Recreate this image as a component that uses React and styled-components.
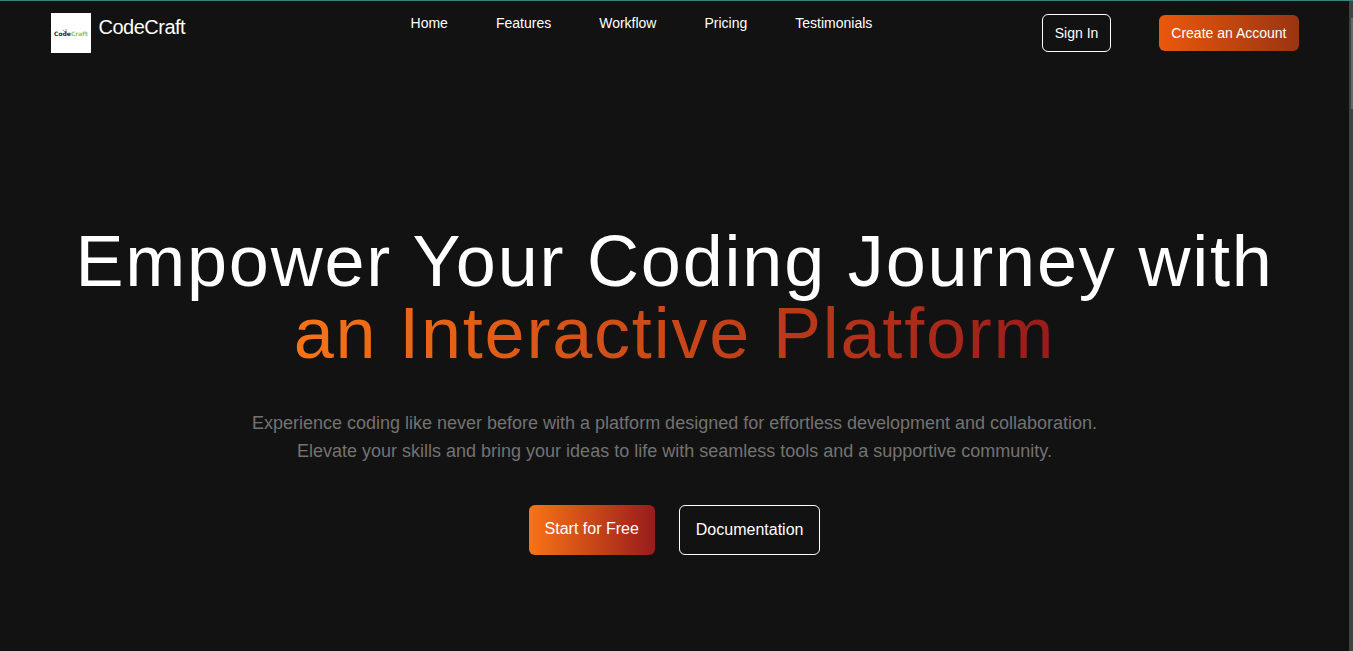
import React from "react";
import styled, { createGlobalStyle } from "styled-components";

const GlobalStyle = createGlobalStyle`
  *, *::before, *::after { box-sizing: border-box; }
  body {
    margin: 0;
    background: #121212;
    color: #fff;
    font-family: "Liberation Sans", Arial, sans-serif;
    font-size: 16px;
    line-height: 24px;
  }
  a { color: inherit; text-decoration: none; }
`;

const Page = styled.div`
  display: flex;
  min-height: 100vh;
  border-top: 1px solid #3b7f80;
`;

const Content = styled.div`
  flex: 1;
  min-width: 0;
`;

const ScrollTrack = styled.div`
  width: 4px;
  background: #424242;
  padding: 17px 0 0 2px;
`;

const ScrollThumb = styled.div`
  height: 91px;
  background: #686868;
`;

const Container = styled.div`
  max-width: 1280px;
  margin: 0 auto;
  padding: 0 16px;
`;

const Bar = styled(Container)`
  display: flex;
  justify-content: space-between;
  align-items: flex-start;
  padding-top: 12px;
  padding-bottom: 12px;
`;

const Brand = styled.a`
  display: flex;
  gap: 8px;
  font-size: 20px;
  line-height: 28px;
  letter-spacing: -0.025em;
`;

const Logo = styled.svg`
  width: 40px;
  height: 40px;
  flex: none;
  letter-spacing: normal;
`;

const NavList = styled.ul`
  display: flex;
  gap: 48px;
  margin: 0 0 0 56px;
  padding: 0;
  list-style: none;
  font-size: 14px;
  line-height: 20px;
`;

const Actions = styled.div`
  display: flex;
  align-items: center;
  gap: 48px;
  height: 40px;
`;

const Button = styled.button`
  display: block;
  border: ${(p) => (p.$outlined ? "1px solid #fff" : "0")};
  border-radius: 6px;
  padding: ${(p) => (p.$large ? "12px 16px" : "8px 12px")};
  background: ${(p) => p.$fill || "transparent"};
  color: #fff;
  font-family: inherit;
  font-size: ${(p) => (p.$large ? "16px" : "14px")};
  line-height: ${(p) => (p.$large ? "24px" : "20px")};
  white-space: nowrap;
  cursor: pointer;
`;

const Hero = styled(Container)`
  display: flex;
  flex-direction: column;
  align-items: center;
  gap: 40px;
  padding-top: 160px;
  text-align: center;
`;

const Title = styled.h1`
  margin: 0;
  font-size: 72px;
  line-height: 72px;
  font-weight: 400;
  letter-spacing: 0.025em;
`;

const Accent = styled.span`
  background: linear-gradient(to right, #f97316, #991b1b);
  background-clip: text;
  -webkit-background-clip: text;
  color: transparent;
`;

const Lead = styled.p`
  max-width: 896px;
  margin: 0;
  color: #737373;
  font-size: 18px;
  line-height: 28px;
`;

const HeroActions = styled.div`
  display: flex;
  gap: 24px;
`;

const links = ["Home", "Features", "Workflow", "Pricing", "Testimonials"];

export default function App() {
  return (
    <>
      <GlobalStyle />
      <Page>
        <Content>
          <header>
            <Bar>
              <Brand href="#home">
                <Logo viewBox="0 0 40 40" aria-hidden="true">
                  <rect width="40" height="40" fill="#fff" />
                  <path d="M12 17l2 2M15 16v3M14 19h2" stroke="#777" strokeWidth="0.8" fill="none" />
                  <text x="3" y="23" fontSize="6" fontWeight="700" fill="#2b2b35" fontFamily="DejaVu Sans, sans-serif">
                    Code<tspan fill="#8cc63f">Craft</tspan>
                  </text>
                </Logo>
                CodeCraft
              </Brand>
              <nav aria-label="Main">
                <NavList>
                  {links.map((name) => (
                    <li key={name}>
                      <a href={`#${name.toLowerCase()}`}>{name}</a>
                    </li>
                  ))}
                </NavList>
              </nav>
              <Actions>
                <Button $outlined>Sign In</Button>
                <Button $fill="linear-gradient(to right, #ea580c, #9a3412)">Create an Account</Button>
              </Actions>
            </Bar>
          </header>
          <main>
            <Hero>
              <Title>
                Empower Your Coding Journey with
                <br />
                <Accent>an Interactive Platform</Accent>
              </Title>
              <Lead>
                Experience coding like never before with a platform designed for effortless development and
                collaboration. Elevate your skills and bring your ideas to life with seamless tools and a
                supportive community.
              </Lead>
              <HeroActions>
                <Button as="a" href="#start" $large $fill="linear-gradient(to right, #f97316, #991b1b)">
                  Start for Free
                </Button>
                <Button as="a" href="#docs" $large $outlined>
                  Documentation
                </Button>
              </HeroActions>
            </Hero>
          </main>
        </Content>
        <ScrollTrack aria-hidden="true">
          <ScrollThumb />
        </ScrollTrack>
      </Page>
    </>
  );
}
